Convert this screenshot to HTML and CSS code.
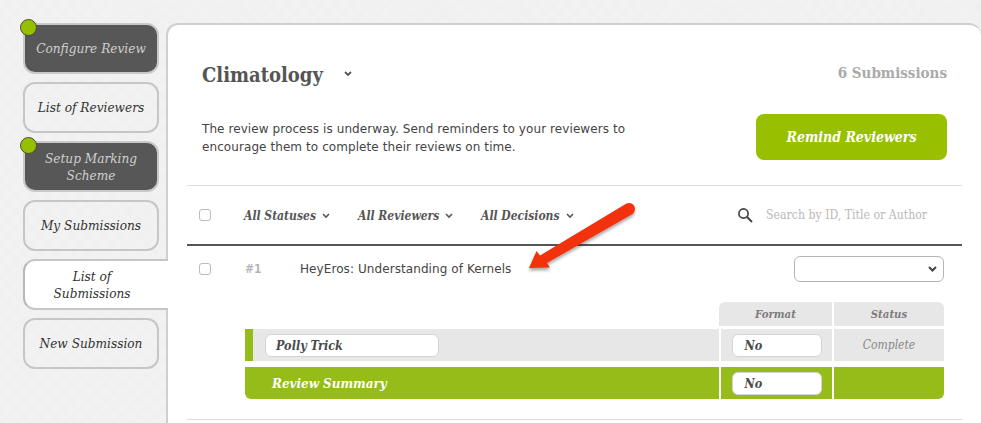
FILE: index.html
```html
<!DOCTYPE html>
<html lang="en">
<head>
<meta charset="utf-8">
<title>Climatology</title>
<link rel="stylesheet" href="styles.css">
</head>
<body>
<div class="page">
  <nav class="side">
    <a class="step done"><span class="dot"></span>Configure Review</a>
    <a class="step">List of Reviewers</a>
    <a class="step done"><span class="dot"></span>Setup Marking<br>Scheme</a>
    <a class="step">My Submissions</a>
    <a class="step active">List of<br>Submissions</a>
    <a class="step">New Submission</a>
  </nav>
  <main class="panel">
    <header class="head">
      <div class="title-row">
        <h1 class="title">Climatology</h1>
        <svg class="chev title-chev" width="8" height="6" viewBox="0 0 8 6"><path d="M1 1l3 3 3-3" fill="none" stroke="#555" stroke-width="1.8"/></svg>
        <span class="count">6 Submissions</span>
      </div>
      <div class="intro-row">
        <p class="intro">The review process is underway. Send reminders to your reviewers to encourage them to complete their reviews on time.</p>
        <button class="remind">Remind Reviewers</button>
      </div>
    </header>
    <div class="filters">
      <span class="check"></span>
      <span class="filter f1">All Statuses <svg class="chev" width="8" height="6" viewBox="0 0 8 6"><path d="M1 1l3 3 3-3" fill="none" stroke="#555" stroke-width="1.6"/></svg></span>
      <span class="filter f2">All Reviewers <svg class="chev" width="8" height="6" viewBox="0 0 8 6"><path d="M1 1l3 3 3-3" fill="none" stroke="#555" stroke-width="1.6"/></svg></span>
      <span class="filter">All Decisions <svg class="chev" width="8" height="6" viewBox="0 0 8 6"><path d="M1 1l3 3 3-3" fill="none" stroke="#555" stroke-width="1.6"/></svg></span>
      <span class="search">
        <svg width="16" height="16" viewBox="0 0 16 16"><circle cx="6.5" cy="6.5" r="4.6" fill="none" stroke="#444" stroke-width="1.7"/><path d="M10 10l5 5" stroke="#444" stroke-width="2"/></svg>
        <span class="search-text">Search by ID, Title or Author</span>
      </span>
    </div>
    <section class="entry">
      <div class="entry-row">
        <span class="check"></span>
        <span class="num">#1</span>
        <span class="name">HeyEros: Understanding of Kernels</span>
        <span class="select"><svg width="9" height="6" viewBox="0 0 9 6"><path d="M1 1l3.500 3.500L8 1" fill="none" stroke="#444" stroke-width="2"/></svg></span>
      </div>
      <div class="grid">
        <div class="hcell hformat">Format</div>
        <div class="hcell hstatus">Status</div>
        <div class="cell reviewer"><span class="pill pill-name">Polly Trick</span></div>
        <div class="cell center"><span class="pill pill-no">No</span></div>
        <div class="cell center complete">Complete</div>
        <div class="gcell summary">Review Summary</div>
        <div class="gcell center"><span class="pill pill-no">No</span></div>
        <div class="gcell last"></div>
      </div>
    </section>
  </main>
  <svg class="arrow" width="120" height="84" viewBox="0 0 120 84">
    <defs><filter id="sh" x="-20%" y="-20%" width="140%" height="150%"><feDropShadow dx="0" dy="2.500" stdDeviation="1.800" flood-color="#000" flood-opacity=".35"/></filter></defs>
    <path d="M7 71 L14.500 54 L18 58.500 L104.500 6.500 Q110 4.500 112.500 9.500 Q114 14 110.500 17 L25 66 L28 70.500 Z" fill="#f2300d" filter="url(#sh)"/>
  </svg>
</div>
</body>
</html>
```

FILE: styles.css
```css
* { box-sizing: border-box; }
html, body { margin: 0; height: 100%; }
body {
  overflow: hidden;
  background-color: #f0f0f0;
  background-image:
    repeating-linear-gradient(135deg, rgba(255,255,255,.14) 0 1px, rgba(0,0,0,.005) 1px 2px),
    repeating-linear-gradient(45deg, rgba(255,255,255,.14) 0 1px, rgba(0,0,0,.005) 1px 2px);
  font-family: "DejaVu Serif Condensed", "DejaVu Serif", serif;
  color: #555;
}
.page {
  position: relative;
  display: flex;
  height: 423px;
  padding-top: 23px;
  overflow: hidden;
}
.side {
  display: flex;
  flex-direction: column;
  gap: 8px;
  width: 166px;
  padding-left: 23px;
  flex: none;
}
.step {
  position: relative;
  display: flex;
  align-items: center;
  justify-content: center;
  text-align: center;
  width: 136px;
  height: 51px;
  border: 2px solid #c6c6c6;
  border-radius: 12px;
  font-style: italic;
  font-size: 13.500px;
  line-height: 17px;
  color: #333;
}
.step.done {
  background: #575757;
  color: #cfcfcf;
  border-color: #c9c9c9;
}
.step.active {
  width: 145px;
  background: #fff;
  border-right: 0;
  border-radius: 12px 0 0 12px;
  padding-right: 9px;
  z-index: 2;
  border-color: #c6c6c6 transparent #c6c6c6 #b8b8b8;
}
.dot {
  position: absolute;
  left: -5px;
  top: -6px;
  width: 17px;
  height: 17px;
  border-radius: 50%;
  background: #96bf00;
  border: 1px solid #4a4a3a;
}
.panel {
  flex: 1;
  background: #fff;
  border: 2px solid #cfcfcf;
  border-right: 0;
  border-bottom: 0;
  border-radius: 12px 12px 0 0;
  padding: 0 19px;
  min-width: 0;
  height: 420px;
}
.head {
  padding: 25px 15px 0;
  height: 161px;
  border-bottom: 1px solid #dcdcdc;
}
.title-row {
  display: flex;
  align-items: center;
  height: 50px;
}
.title {
  margin: 0;
  font-size: 20px;
  line-height: 50px;
  font-weight: bold;
  color: #555;
}
.title-chev { margin-left: 21px; margin-bottom: 2px; }
.count {
  margin-left: auto;
  margin-bottom: 4px;
  font-size: 15px;
  font-weight: bold;
  color: #aaa;
}
.intro-row {
  display: flex;
  justify-content: space-between;
  padding-top: 14px;
}
.intro {
  margin: 0;
  width: 440px;
  padding-top: 6px;
  font-family: "DejaVu Sans", sans-serif;
  font-size: 12px;
  letter-spacing: .08px;
  line-height: 18px;
  color: #444;
}
.remind {
  width: 191px;
  height: 46px;
  border: 0;
  border-radius: 8px;
  background: #99c000;
  color: #fff;
  font-family: inherit;
  font-style: italic;
  font-weight: bold;
  font-size: 14px;
}
.filters {
  display: flex;
  align-items: center;
  height: 60px;
  padding-left: 12px;
  border-bottom: 2px solid #555;
}
.check {
  width: 12px;
  height: 12px;
  border: 1px solid #bbb;
  border-radius: 3px;
  flex: none;
}
.filter {
  display: flex;
  align-items: center;
  gap: 6px;
  padding-top: 1px;
  font-style: italic;
  font-weight: bold;
  font-size: 12px;
  color: #555;
}
.f1 { width: 114px; margin-left: 33px; }
.f2 { width: 123px; }
.search {
  margin-left: auto;
  display: flex;
  align-items: center;
  gap: 13px;
  width: 240px;
  padding-left: 15px;
}
.search-text {
  font-size: 12.200px;
  color: #bdb9b9;
}
.entry {
  height: 174px;
  border-bottom: 1px solid #dcdcdc;
}
.entry-row {
  display: flex;
  align-items: center;
  height: 46px;
  padding: 0 18px 0 12px;
}
.num {
  margin-left: 34px;
  width: 55px;
  font-family: "DejaVu Sans Condensed", "DejaVu Sans", sans-serif;
  font-size: 12px;
  font-weight: bold;
  color: #b5b5b5;
}
.name {
  font-family: "DejaVu Sans", sans-serif;
  font-size: 12px;
  letter-spacing: .08px;
  color: #444;
}
.select {
  margin-left: auto;
  display: flex;
  align-items: center;
  justify-content: flex-end;
  width: 150px;
  height: 26px;
  padding-right: 6px;
  border: 1px solid #b5b5b5;
  border-radius: 6px;
}
.grid {
  display: grid;
  grid-template-columns: 474px 111px 110px;
  grid-template-rows: 24px 32px 35px;
  gap: 3px 2px;
  margin: 10px 0 0 58px;
  width: 699px;
}
.grid > :nth-child(n+6) { margin-top: 3px; }
.hcell {
  background: #e7e7e7;
  display: flex;
  align-items: center;
  justify-content: center;
  font-style: italic;
  font-weight: bold;
  font-size: 11.300px;
  color: #807c7c;
}
.hformat { grid-column: 2; margin-left: -2px; border-radius: 6px 0 0 0; }
.hstatus { grid-column: 3; border-radius: 0 6px 0 0; }
.cell {
  background: #e7e7e7;
  display: flex;
  align-items: center;
}
.reviewer {
  border-left: 8px solid #95bc18;
  padding-left: 12px;
}
.center { justify-content: center; }
.complete {
  font-style: italic;
  font-size: 12px;
  color: #888;
}
.gcell {
  background: #95bc18;
  display: flex;
  align-items: center;
}
.summary {
  border-radius: 0 0 0 6px;
  padding-left: 27px;
  color: #fff;
  font-style: italic;
  font-weight: bold;
  font-size: 13.300px;
}
.last { border-radius: 0 0 6px 0; }
.pill {
  display: flex;
  align-items: center;
  height: 23px;
  background: #fff;
  border: 1px solid #d4d4d4;
  border-radius: 6px;
  font-style: italic;
  font-weight: bold;
  font-size: 12.500px;
  color: #4a4a4a;
}
.pill-name { width: 174px; padding-left: 10px; }
.pill-no { width: 90px; padding-left: 12px; }
.arrow {
  position: absolute;
  left: 522px;
  top: 197px;
  z-index: 3;
}
```
